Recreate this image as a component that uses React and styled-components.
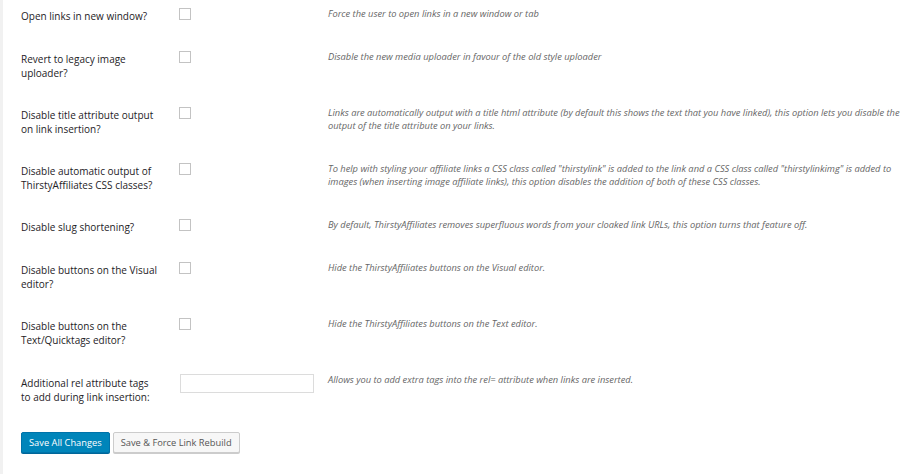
import React from 'react'
import styled, { createGlobalStyle } from 'styled-components'

const GlobalStyle = createGlobalStyle`
  html, body {
    margin: 0;
    padding: 0;
    background: #fff;
  }
  body {
    font-family: "Open Sans", "Noto Sans", sans-serif;
    color: #23282d;
  }
`

export const Page = styled.div`
  width: 916px;
  height: 474px;
  box-sizing: border-box;
  border-left: 3px solid #f1f1f1;
  padding-left: 18px;
  overflow: hidden;
`

export const Table = styled.div`
  display: flex;
  flex-direction: column;
`

export const Row = styled.div`
  display: grid;
  grid-template-columns: 147px 160px 1fr;
  height: ${p => p.lines > 1 ? '56px' : '43px'};
`

export const Label = styled.div`
  padding-top: ${p => p.field ? '11px' : '10px'};
  padding-right: 9px;
  font-size: 10px;
  line-height: 13.5px;
  color: #1e2226;
`

export const Control = styled.div`
  padding-top: 8px;
  padding-left: ${p => p.field ? '12px' : '11px'};
`

export const Checkbox = styled.span`
  display: block;
  width: 12px;
  height: 12px;
  box-sizing: border-box;
  border: 1px solid #c3c3c3;
  background: #fff;
`

export const TextInput = styled.input`
  display: block;
  width: 134px;
  height: 19px;
  box-sizing: border-box;
  margin: 0;
  padding: 0 4px;
  border: 1px solid #dcdcdc;
  background: #fff;
  font: inherit;
  outline: none;
`

export const Description = styled.p`
  margin: 0;
  padding-top: 7px;
  padding-right: 8px;
  font-size: 9.3px;
  line-height: 13px;
  font-style: italic;
  color: #666;
`

export const Actions = styled.div`
  display: flex;
  gap: 3px;
  margin-top: 10px;
`

export const Button = styled.button`
  height: 21px;
  box-sizing: border-box;
  margin: 0;
  padding: 0 7px;
  border-radius: 2px;
  font-family: "Open Sans", "Noto Sans", sans-serif;
  font-size: 9.3px;
  border: 1px solid ${p => p.primary ? '#0073aa' : '#cccccc'};
  background: ${p => p.primary ? '#0085ba' : '#f7f7f7'};
  color: ${p => p.primary ? '#fff' : '#555'};
  box-shadow: ${p => p.primary ? '0 1px 0 #006799' : '0 1px 0 #ccc'};
`

const settings = [
  {
    label: 'Open links in new window?',
    desc: 'Force the user to open links in a new window or tab',
    lines: 1
  },
  {
    label: 'Revert to legacy image uploader?',
    desc: 'Disable the new media uploader in favour of the old style uploader',
    lines: 2
  },
  {
    label: 'Disable title attribute output on link insertion?',
    desc: 'Links are automatically output with a title html attribute (by default this shows the text that you have linked), this option lets you disable the output of the title attribute on your links.',
    lines: 2
  },
  {
    label: 'Disable automatic output of ThirstyAffiliates CSS classes?',
    desc: 'To help with styling your affiliate links a CSS class called "thirstylink" is added to the link and a CSS class called "thirstylinkimg" is added to images (when inserting image affiliate links), this option disables the addition of both of these CSS classes.',
    lines: 2
  },
  {
    label: 'Disable slug shortening?',
    desc: 'By default, ThirstyAffiliates removes superfluous words from your cloaked link URLs, this option turns that feature off.',
    lines: 1
  },
  {
    label: 'Disable buttons on the Visual editor?',
    desc: 'Hide the ThirstyAffiliates buttons on the Visual editor.',
    lines: 2
  },
  {
    label: 'Disable buttons on the Text/Quicktags editor?',
    desc: 'Hide the ThirstyAffiliates buttons on the Text editor.',
    lines: 2
  }
]

function App () {
  return (
    <Page>
      <GlobalStyle />
      <Table>
        {settings.map((s, i) =>
          <Row key={i} lines={s.lines}>
            <Label>{s.label}</Label>
            <Control><Checkbox /></Control>
            <Description>{s.desc}</Description>
          </Row>
        )}
        <Row lines={2}>
          <Label field>Additional rel attribute tags to add during link insertion:</Label>
          <Control field><TextInput type='text' /></Control>
          <Description>Allows you to add extra tags into the rel= attribute when links are inserted.</Description>
        </Row>
      </Table>
      <Actions>
        <Button primary>Save All Changes</Button>
        <Button>Save &amp; Force Link Rebuild</Button>
      </Actions>
    </Page>
  )
}

export default App
